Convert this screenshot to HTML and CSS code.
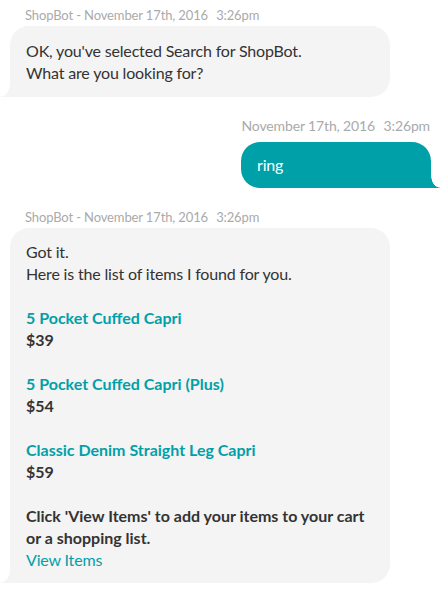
FILE: index.html
```html
<!DOCTYPE html>
<html lang="en">
<head>
<meta charset="utf-8">
<title>ShopBot chat</title>
<link rel="stylesheet" href="styles.css">
</head>
<body>
<div class="chat">
  <div class="msg bot">
    <div class="meta">ShopBot - November 17th, 2016 <span class="time">3:26pm</span></div>
    <div class="bubble">OK, you've selected Search for ShopBot.<br>What are you looking for?</div>
  </div>

  <div class="msg user">
    <div class="meta">November 17th, 2016 <span class="time">3:26pm</span></div>
    <div class="bubble">ring</div>
  </div>

  <div class="msg bot">
    <div class="meta">ShopBot - November 17th, 2016 <span class="time">3:26pm</span></div>
    <div class="bubble bubble-list">
      <p>Got it.<br>Here is the list of items I found for you.</p>
      <p><a class="item" href="#">5 Pocket Cuffed Capri</a><br><span class="price">$39</span></p>
      <p><a class="item" href="#">5 Pocket Cuffed Capri (Plus)</a><br><span class="price">$54</span></p>
      <p><a class="item" href="#">Classic Denim Straight Leg Capri</a><br><span class="price">$59</span></p>
      <p class="cta">Click 'View Items' to add your items to your cart or a shopping list.</p>
      <a class="view" href="#">View Items</a>
    </div>
  </div>
</div>
</body>
</html>
```

FILE: styles.css
```css
html, body {
  margin: 0;
  padding: 0;
  background: #ffffff;
}

body {
  font-family: Lato, "Open Sans", "Liberation Sans", sans-serif;
  color: #333333;
}

.chat {
  display: flex;
  flex-direction: column;
  gap: 20px;
  padding-top: 6px;
}

.msg {
  display: flex;
  flex-direction: column;
}

.meta {
  font-size: 13px;
  line-height: 18px;
  color: #aaaaaa;
  margin-bottom: 2px;
  letter-spacing: -0.13px;
}

.time {
  margin-left: 5px;
}

.bot .meta {
  padding-left: 25px;
}

.user {
  align-items: flex-end;
}

.user .meta {
  font-size: 14px;
  padding-right: 10px;
  margin-bottom: 7px;
}

.bubble {
  position: relative;
  font-size: 16px;
  line-height: 22px;
  letter-spacing: -0.17px;
  box-sizing: border-box;
}

.bot .bubble {
  margin-left: 10px;
  width: 380px;
  background: #f4f4f4;
  padding: 14px 15px 13px 16px;
  border-radius: 19px 19px 19px 0;
}

.bot .bubble::after {
  content: "";
  position: absolute;
  left: -10px;
  bottom: 0;
  width: 10px;
  height: 12px;
  background: radial-gradient(10px 12px at 0 0, rgba(244, 244, 244, 0) 94%, #f4f4f4 100%);
}

.user .bubble {
  margin-right: 9px;
  width: 190px;
  background: #00a0a9;
  color: #ffffff;
  padding: 12px 16px;
  border-radius: 19px 19px 0 19px;
}

.user .bubble::after {
  content: "";
  position: absolute;
  right: -9px;
  bottom: 0;
  width: 9px;
  height: 12px;
  background: radial-gradient(9px 12px at 100% 0, rgba(0, 160, 169, 0) 94%, #00a0a9 100%);
}

.bubble-list {
  padding-bottom: 12px !important;
  padding-top: 13px !important;
}

.bubble p {
  margin: 0 0 22px;
}

.bubble p.cta {
  margin: 0;
  font-weight: 700;
}

.item {
  color: #00a0a9;
  font-weight: 700;
  text-decoration: none;
}

.price,
.item,
.cta {
  letter-spacing: 0;
}

.price {
  font-weight: 700;
}

.view {
  display: block;
  color: #00a0a9;
  text-decoration: none;
}
```
